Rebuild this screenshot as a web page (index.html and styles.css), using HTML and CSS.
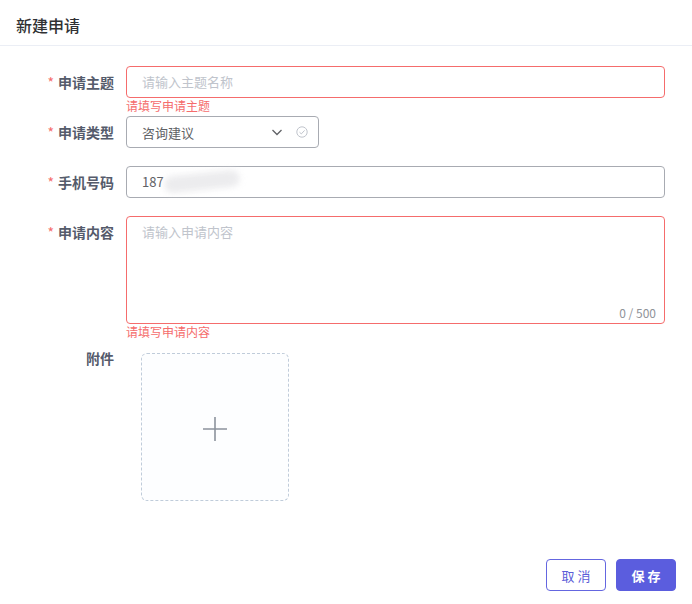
FILE: index.html
```html
<!DOCTYPE html>
<html lang="zh-CN">
<head>
  <meta charset="UTF-8">
  <title>新建申请</title>
  <link rel="stylesheet" href="styles.css">
</head>
<body>

<div class="dialog">
  <div class="header">新建申请</div>

  <div class="form">
    <div class="item">
      <label class="label required">申请主题</label>
      <div class="field">
        <input class="input error" type="text" placeholder="请输入主题名称">
        <div class="tip">请填写申请主题</div>
      </div>
    </div>

    <div class="item">
      <label class="label required">申请类型</label>
      <div class="field">
        <div class="select">
          <span class="value">咨询建议</span>
          <svg class="arrow" width="12" height="12" viewBox="0 0 12 12">
            <path d="M1.5 4 L6 8.5 L10.5 4" fill="none" stroke="#606266" stroke-width="1.3"/>
          </svg>
          <svg class="ok" width="12" height="12" viewBox="0 0 12 12">
            <circle cx="6" cy="6" r="5.2" fill="none" stroke="#c0c4cc" stroke-width="1"/>
            <path d="M3.5 6.2 L5.3 7.9 L8.6 4.4" fill="none" stroke="#c0c4cc" stroke-width="1"/>
          </svg>
        </div>
      </div>
    </div>

    <div class="item">
      <label class="label required">手机号码</label>
      <div class="field">
        <input class="input" type="text" value="187">
        <div class="smudge"></div>
      </div>
    </div>

    <div class="item">
      <label class="label required">申请内容</label>
      <div class="field">
        <textarea class="textarea error" placeholder="请输入申请内容"></textarea>
        <span class="count">0 / 500</span>
        <div class="tip">请填写申请内容</div>
      </div>
    </div>

    <div class="item">
      <label class="label">附件</label>
      <div class="field">
        <div class="upload">
          <svg width="26" height="26" viewBox="0 0 26 26">
            <path d="M13 1 V25 M1 13 H25" stroke="#8c939d" stroke-width="1.6"/>
          </svg>
        </div>
      </div>
    </div>
  </div>

  <div class="footer">
    <button class="btn">取 消</button>
    <button class="btn primary">保 存</button>
  </div>
</div>

</body>
</html>
```

FILE: styles.css
```css
* {
  box-sizing: border-box;
}

body {
  margin: 0;
  background: #ffffff;
  font-family: "Noto Sans CJK SC", "Noto Sans", sans-serif;
  color: #303133;
}

.dialog {
  height: 100vh;
  display: flex;
  flex-direction: column;
}

.header {
  height: 46px;
  padding: 0 16px;
  line-height: 50px;
  font-size: 16px;
  font-weight: 500;
  color: #303133;
  border-bottom: 1px solid #ebeef5;
}

.form {
  padding: 20px 27px 0 0;
}

.item {
  display: flex;
  margin-bottom: 18px;
}

.label {
  width: 126px;
  padding-right: 12px;
  text-align: right;
  font-size: 14px;
  line-height: 32px;
  font-weight: bold;
  color: #555b6b;
  flex-shrink: 0;
}

.label.required::before {
  content: "*";
  color: #f56c6c;
  margin-right: 4px;
  font-weight: normal;
}

.field {
  flex: 1;
  position: relative;
}

.input {
  display: block;
  width: 100%;
  height: 32px;
  padding: 0 15px 2px;
  border: 1px solid #a8abb2;
  border-radius: 4px;
  font-family: inherit;
  font-size: 13px;
  color: #606266;
  outline: none;
}

.input::placeholder,
.textarea::placeholder {
  color: #c0c4cc;
}

.error {
  border-color: #f56c6c !important;
}

.tip {
  position: absolute;
  top: 100%;
  left: 0;
  padding-top: 1px;
  font-size: 12px;
  line-height: 14px;
  color: #f56c6c;
}

.select {
  width: 193px;
  height: 32px;
  padding: 0 10px 0 15px;
  border: 1px solid #a8abb2;
  border-radius: 4px;
  display: flex;
  align-items: center;
  font-size: 13px;
  color: #606266;
}

.select .value {
  flex: 1;
}

.select .arrow {
  margin-right: 13px;
}

.smudge {
  position: absolute;
  left: 38px;
  top: 7px;
  width: 76px;
  height: 17px;
  border-radius: 10px;
  background: #ececee;
  filter: blur(3px);
  transform: rotate(-6deg);
}

.textarea {
  display: block;
  width: 100%;
  height: 108px;
  padding: 5px 15px;
  border: 1px solid #a8abb2;
  border-radius: 4px;
  font-family: inherit;
  font-size: 13px;
  line-height: 20px;
  resize: none;
  outline: none;
}

.count {
  position: absolute;
  right: 9px;
  bottom: 3px;
  font-size: 12px;
  color: #909399;
}

.upload {
  width: 148px;
  height: 148px;
  margin: 11px 0 0 15px;
  border: 1px dashed #c0ccda;
  border-radius: 6px;
  background: #fdfeff;
  display: flex;
  align-items: center;
  justify-content: center;
  padding-top: 4px;
}

.footer {
  margin-top: auto;
  padding: 0 16px 13px;
  display: flex;
  justify-content: flex-end;
  gap: 10px;
}

.btn {
  width: 60px;
  height: 32px;
  border: 1px solid #6466e0;
  border-radius: 4px;
  background: #ffffff;
  color: #5b5dd8;
  font-family: inherit;
  font-size: 13px;
  cursor: pointer;
}

.btn.primary {
  background: #5b5dde;
  border-color: #5b5dde;
  color: #ffffff;
  font-weight: bold;
}
```
